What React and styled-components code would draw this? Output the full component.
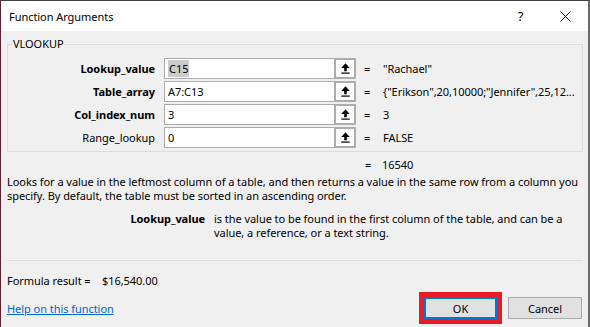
import styled, { createGlobalStyle } from "styled-components";

const GlobalStyle = createGlobalStyle`
  html, body {
    margin: 0;
    padding: 0;
    background: #1f3a2b;
  }
  body {
    font-family: "Noto Sans", "Open Sans", sans-serif;
    font-size: 11px;
    letter-spacing: -0.05px;
    color: #000;
  }
  * { box-sizing: border-box; }
`;

const Window = styled.div`
  width: 590px;
  height: 327px;
  display: flex;
  flex-direction: column;
  background: #f0f0f0;
  border-top: 1px solid #3f3f3f;
  border-left: 1px solid #5b2333;
  border-right: 2px solid #6b6b6b;
  overflow: hidden;
`;

const TitleBar = styled.div`
  height: 30px;
  flex-shrink: 0;
  display: flex;
  align-items: center;
  padding-left: 8px;
  background: #fff;
`;

const Title = styled.div`
  flex: 1;
  font-size: 11px;
`;

const TitleButton = styled.button`
  width: 45px;
  height: 30px;
  padding: 0;
  border: 0;
  background: transparent;
  display: flex;
  align-items: center;
  justify-content: center;
  font-family: inherit;
  font-size: 13px;
  color: #000;
`;

const Body = styled.div`
  flex: 1;
  display: flex;
  flex-direction: column;
  padding: 5px 5px 0 6px;
`;

const Group = styled.fieldset`
  margin: 0;
  width: 576px;
  padding: 6px 0 3px 0;
  border: 1px solid #dcdcdc;
`;

const Legend = styled.legend`
  margin-left: 4px;
  padding: 0 1px;
  line-height: 16px;
`;

const ArgGrid = styled.div`
  display: grid;
  grid-template-columns: 156px 170px 22px 27px 1fr;
  grid-auto-rows: 21px;
  row-gap: 2px;
  align-items: center;
`;

const ArgLabel = styled.div`
  text-align: right;
  padding-right: 9px;
  font-weight: ${(p) => (p.$required ? 700 : 400)};
  white-space: nowrap;
`;

const Field = styled.div`
  height: 21px;
  display: flex;
  align-items: center;
  padding-left: 3px;
  background: #fff;
  border: 1px solid #ababab;
  border-right: 0;
`;

const Selected = styled.span`
  background: #cccccc;
  padding: 1px 1px;
`;

const RefButton = styled.button`
  width: 22px;
  height: 21px;
  padding: 0;
  display: flex;
  align-items: center;
  justify-content: center;
  background: #fdfdfd;
  border: 2px solid #adadad;
`;

const Eq = styled.div`
  padding-left: 8px;
`;

const Value = styled.div`
  white-space: nowrap;
  overflow: hidden;
`;

const ResultLine = styled.div`
  display: flex;
  margin-top: 5px;
  padding-left: 358px;
  line-height: 16px;
`;

const ResultEq = styled.span`
  width: 17px;
`;

const Description = styled.p`
  margin: 2px 0 0 0;
  line-height: 14px;
  white-space: nowrap;
`;

const ArgHelp = styled.div`
  display: grid;
  grid-template-columns: 198px 1fr;
  column-gap: 9px;
  margin-top: 9px;
  line-height: 14px;
`;

const ArgHelpName = styled.div`
  text-align: right;
  font-weight: 700;
`;

const Separator = styled.hr`
  width: 576px;
  margin: auto 0 0 0;
  border: 0;
  border-top: 1px solid #dcdcdc;
`;

const FormulaResult = styled.div`
  display: flex;
  margin-top: 12px;
  line-height: 16px;
`;

const ResultLabel = styled.span`
  width: 95px;
`;

const Footer = styled.div`
  display: flex;
  align-items: center;
  margin: 8px 0 8px 0;
  padding-right: 1px;
`;

const HelpLink = styled.a`
  flex: 1;
  color: #0066cc;
  text-decoration: underline;
`;

const DialogButton = styled.button`
  width: ${(p) => (p.$wide ? 74 : 73)}px;
  height: 22px;
  margin-left: ${(p) => (p.$wide ? 11 : 0)}px;
  padding: 0;
  font-family: inherit;
  font-size: 11px;
  letter-spacing: inherit;
  color: #000;
  background: #e1e1e1;
  border: ${(p) => (p.$default ? "2px solid #0078d7" : "1px solid #adadad")};
  box-shadow: ${(p) => (p.$highlight ? "0 0 0 5px #ed1c24" : "none")};
`;

const CollapseIcon = () => (
  <svg width="9" height="11" viewBox="0 0 9 11">
    <path d="M4.5 0.3 L8.7 5 H5.8 V8.2 H3.2 V5 H0.3 Z" fill="#000" />
    <rect x="0.3" y="9.5" width="8.4" height="1.2" fill="#000" />
  </svg>
);

const CloseIcon = () => (
  <svg width="11" height="11" viewBox="0 0 11 11">
    <path d="M0.5 0.5 L10.5 10.5 M10.5 0.5 L0.5 10.5" stroke="#000" strokeWidth="1" />
  </svg>
);

const args = [
  { name: "Lookup_value", value: "C15", result: "\"Rachael\"", required: true, selected: true },
  { name: "Table_array", value: "A7:C13", result: "{\"Erikson\",20,10000;\"Jennifer\",25,12...", required: true },
  { name: "Col_index_num", value: "3", result: "3", required: true },
  { name: "Range_lookup", value: "0", result: "FALSE", required: false },
];

export default function App() {
  return (
    <>
      <GlobalStyle />
      <Window>
        <TitleBar>
          <Title>Function Arguments</Title>
          <TitleButton>?</TitleButton>
          <TitleButton>
            <CloseIcon />
          </TitleButton>
        </TitleBar>
        <Body>
          <Group>
            <Legend>VLOOKUP</Legend>
            <ArgGrid>
              {args.map((a) => (
                <>
                  <ArgLabel key={a.name} $required={a.required}>{a.name}</ArgLabel>
                  <Field>{a.selected ? <Selected>{a.value}</Selected> : a.value}</Field>
                  <RefButton>
                    <CollapseIcon />
                  </RefButton>
                  <Eq>=</Eq>
                  <Value>{a.result}</Value>
                </>
              ))}
            </ArgGrid>
          </Group>
          <ResultLine>
            <ResultEq>=</ResultEq>
            <span>16540</span>
          </ResultLine>
          <Description>
            Looks for a value in the leftmost column of a table, and then returns a value in the same row from a column you
            <br />
            specify. By default, the table must be sorted in an ascending order.
          </Description>
          <ArgHelp>
            <ArgHelpName>Lookup_value</ArgHelpName>
            <div>
              is the value to be found in the first column of the table, and can be a
              <br />
              value, a reference, or a text string.
            </div>
          </ArgHelp>
          <Separator />
          <FormulaResult>
            <ResultLabel>Formula result =</ResultLabel>
            <span>$16,540.00</span>
          </FormulaResult>
          <Footer>
            <HelpLink href="#">Help on this function</HelpLink>
            <DialogButton $default $highlight>OK</DialogButton>
            <DialogButton $wide>Cancel</DialogButton>
          </Footer>
        </Body>
      </Window>
    </>
  );
}
